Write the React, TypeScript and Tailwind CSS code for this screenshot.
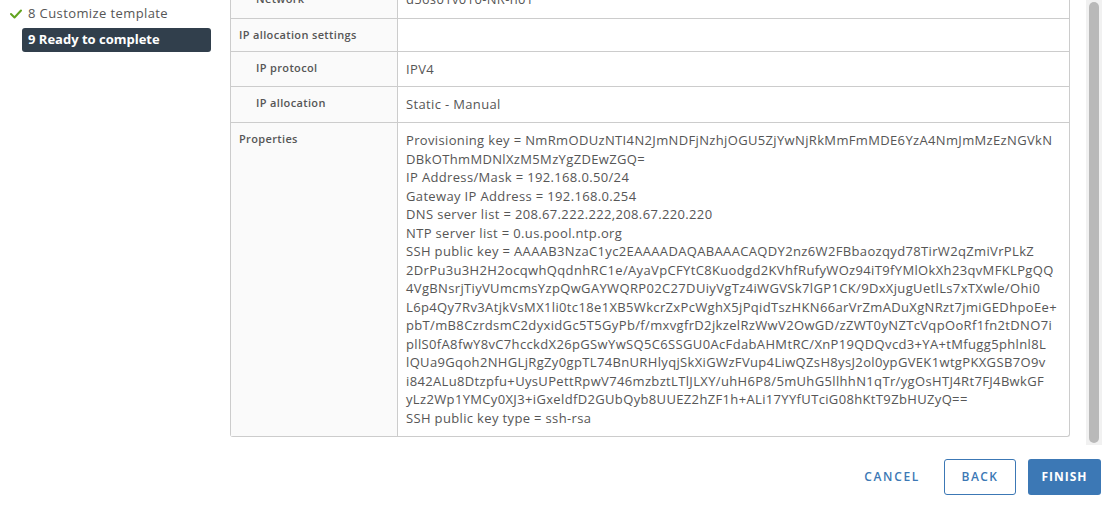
import React from "react";

/* Deploy OVF wizard — step 9 "Ready to complete" review table */

const propertyLines = [
  "Provisioning key = NmRmODUzNTI4N2JmNDFjNzhjOGU5ZjYwNjRkMmFmMDE6YzA4NmJmMzEzNGVkN",
  "DBkOThmMDNlXzM5MzYgZDEwZGQ=",
  "IP Address/Mask = 192.168.0.50/24",
  "Gateway IP Address = 192.168.0.254",
  "DNS server list = 208.67.222.222,208.67.220.220",
  "NTP server list = 0.us.pool.ntp.org",
  "SSH public key = AAAAB3NzaC1yc2EAAAADAQABAAACAQDY2nz6W2FBbaozqyd78TirW2qZmiVrPLkZ",
  "2DrPu3u3H2H2ocqwhQqdnhRC1e/AyaVpCFYtC8Kuodgd2KVhfRufyWOz94iT9fYMlOkXh23qvMFKLPgQQ",
  "4VgBNsrjTiyVUmcmsYzpQwGAYWQRP02C27DUiyVgTz4iWGVSk7lGP1CK/9DxXjugUetlLs7xTXwle/Ohi0",
  "L6p4Qy7Rv3AtjkVsMX1li0tc18e1XB5WkcrZxPcWghX5jPqidTszHKN66arVrZmADuXgNRzt7jmiGEDhpoEe+",
  "pbT/mB8CzrdsmC2dyxidGc5T5GyPb/f/mxvgfrD2jkzelRzWwV2OwGD/zZWT0yNZTcVqpOoRf1fn2tDNO7i",
  "pllS0fA8fwY8vC7hcckdX26pGSwYwSQ5C6SSGU0AcFdabAHMtRC/XnP19QDQvcd3+YA+tMfugg5phlnl8L",
  "lQUa9Gqoh2NHGLjRgZy0gpTL74BnURHlyqjSkXiGWzFVup4LiwQZsH8ysJ2ol0ypGVEK1wtgPKXGSB7O9v",
  "i842ALu8Dtzpfu+UysUPettRpwV746mzbztLTlJLXY/uhH6P8/5mUhG5llhhN1qTr/ygOsHTJ4Rt7FJ4BwkGF",
  "yLz2Wp1YMCy0XJ3+iGxeldfD2GUbQyb8UUEZ2hZF1h+ALi17YYfUTciG08hKtT9ZbHUZyQ==",
  "SSH public key type = ssh-rsa",
];

function Row({
  label,
  value,
  indent = false,
  height,
  children,
}: {
  label: string;
  value?: string;
  indent?: boolean;
  height?: string;
  children?: React.ReactNode;
}) {
  return (
    <div className={`flex border-t border-[#cccccc] ${height ?? ""}`}>
      <div
        className={`w-[167px] shrink-0 border-r border-[#cccccc] bg-[#fafafa] pt-[9px] text-[11px] font-semibold leading-[14px] tracking-[0.35px] text-[#565656] ${
          indent ? "pl-[25px]" : "pl-[8px]"
        }`}
      >
        {label}
      </div>
      <div className="min-w-0 flex-1 pl-[8px] pt-[8px] text-[13px] leading-[18px] tracking-[0.35px] text-[#565656]">
        {value}
        {children}
      </div>
    </div>
  );
}

export default function App() {
  return (
    <div className="flex h-[505px] w-[1108px] flex-col overflow-hidden bg-white font-['Open_Sans',sans-serif]">
      <div className="flex min-h-0 flex-1">
        {/* Step list */}
        <aside className="w-[230px] shrink-0 pl-[22px] pr-[19px]">
          <div className="flex h-[28px] items-center pb-[1px] text-[13px] tracking-[0.4px] text-[#565656]">
            <svg width="12" height="10" viewBox="0 0 12 10" className="-ml-[12px] mr-[6px]" fill="none" stroke="#62a420" strokeWidth="2" strokeLinecap="round" strokeLinejoin="round">
              <polyline points="1,5 4.5,8.5 11,1.5" />
            </svg>
            <span>8 Customize template</span>
          </div>
          <div className="flex h-[24px] items-center rounded-[3px] bg-[#313f4c] pl-[6px] text-[13px] font-bold text-white">
            9 Ready to complete
          </div>
        </aside>

        {/* Review table with scrollbar */}
        <div className="flex min-w-0 flex-1">
          <div className="h-[443px] w-[840px] shrink-0 overflow-hidden">
            <div className="-mt-[18px] rounded-b-[3px] border-x border-b border-[#cccccc]">
              <div className="flex h-[36px]">
                <div className="w-[167px] shrink-0 border-r border-[#cccccc] bg-[#fafafa] pl-[25px] pt-[10px] text-[11px] font-semibold leading-[14px] tracking-[0.35px] text-[#565656]">
                  Network
                </div>
                <div className="flex-1 pl-[8px] pt-[8px] text-[13px] leading-[18px] tracking-[0.35px] text-[#565656]">
                  d56s01v010-NR-n01
                </div>
              </div>
              <Row label="IP allocation settings" height="h-[33px]" />
              <Row label="IP protocol" value="IPV4" indent height="h-[35px]" />
              <Row label="IP allocation" value="Static - Manual" indent height="h-[36px]" />
              <div className="flex h-[314px] border-t border-[#cccccc]">
                <div className="w-[167px] shrink-0 border-r border-[#cccccc] bg-[#fafafa] pl-[8px] pt-[9px] text-[11px] font-semibold leading-[14px] tracking-[0.35px] text-[#565656]">
                  Properties
                </div>
                <div className="min-w-0 flex-1 pl-[8px] pt-[8px] text-[13px] leading-[18.5px] tracking-[0.35px] text-[#565656]">
                  {propertyLines.map((line) => (
                    <div key={line} className="whitespace-nowrap">
                      {line}
                    </div>
                  ))}
                </div>
              </div>
            </div>
          </div>
          <div className="ml-[16px] h-[445px] w-[16px] shrink-0 bg-[#f1f1f1] px-[3px] pt-[2px]">
            <div className="h-[441px] rounded-full bg-[#b9b9b9]" />
          </div>
        </div>
      </div>

      {/* Footer actions */}
      <div className="flex h-[60px] shrink-0 items-start justify-end gap-[12px] pr-[7px] pt-[14px]">
        <button className="h-[36px] px-[12px] text-[12px] font-semibold tracking-[0.14em] text-[#3c78b5]">
          CANCEL
        </button>
        <button className="h-[36px] w-[72px] rounded-[3px] border border-[#3c78b5] text-[12px] font-semibold tracking-[0.12em] text-[#3c78b5]">
          BACK
        </button>
        <button className="h-[36px] w-[73px] rounded-[3px] bg-[#3c78b5] text-[12px] font-bold tracking-[0.08em] text-white">
          FINISH
        </button>
      </div>
    </div>
  );
}
